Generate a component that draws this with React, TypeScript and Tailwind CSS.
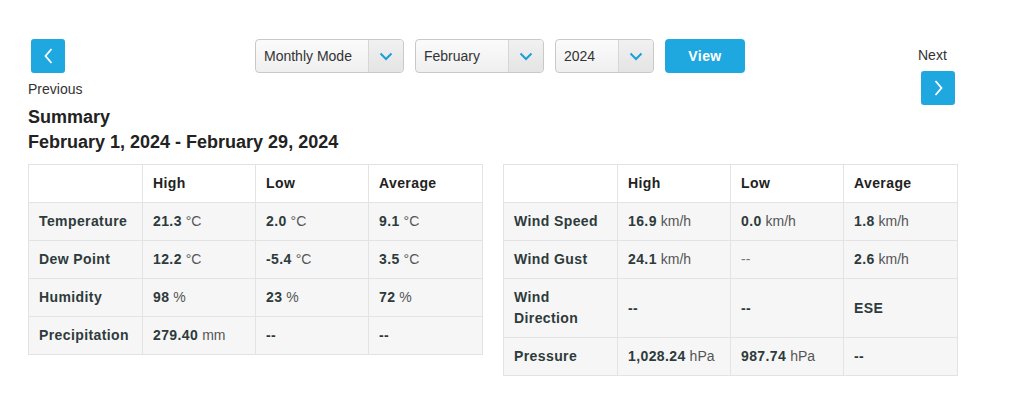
import React from 'react';

type Cell = { v?: string; u?: string; light?: boolean };

const leftRows: { label: string; cells: Cell[] }[] = [
  { label: 'Temperature', cells: [{ v: '21.3', u: '°C' }, { v: '2.0', u: '°C' }, { v: '9.1', u: '°C' }] },
  { label: 'Dew Point', cells: [{ v: '12.2', u: '°C' }, { v: '-5.4', u: '°C' }, { v: '3.5', u: '°C' }] },
  { label: 'Humidity', cells: [{ v: '98', u: '%' }, { v: '23', u: '%' }, { v: '72', u: '%' }] },
  { label: 'Precipitation', cells: [{ v: '279.40', u: 'mm' }, { v: '--' }, { v: '--' }] },
];

const rightRows: { label: string; cells: Cell[]; tall?: boolean }[] = [
  { label: 'Wind Speed', cells: [{ v: '16.9', u: 'km/h' }, { v: '0.0', u: 'km/h' }, { v: '1.8', u: 'km/h' }] },
  { label: 'Wind Gust', cells: [{ v: '24.1', u: 'km/h' }, { v: '--', light: true }, { v: '2.6', u: 'km/h' }] },
  { label: 'Wind Direction', cells: [{ v: '--' }, { v: '--' }, { v: 'ESE' }], tall: true },
  { label: 'Pressure', cells: [{ v: '1,028.24', u: 'hPa' }, { v: '987.74', u: 'hPa' }, { v: '--' }] },
];

function Chevron({ dir }: { dir: 'left' | 'right' | 'down' }) {
  if (dir === 'down') {
    return (
      <svg width="14" height="9" viewBox="0 0 14 9" fill="none">
        <path d="M1.5 1.5 L7 7 L12.5 1.5" stroke="#1b9fd8" strokeWidth="2" />
      </svg>
    );
  }
  return (
    <svg width="9" height="16" viewBox="0 0 9 16" fill="none">
      <path d={dir === 'left' ? 'M7.5 1 L1.5 8 L7.5 15' : 'M1.5 1 L7.5 8 L1.5 15'} stroke="#fff" strokeWidth="1.8" />
    </svg>
  );
}

function NavButton({ dir }: { dir: 'left' | 'right' }) {
  return (
    <button className="flex h-[34px] w-[34px] items-center justify-center rounded-[3px] bg-[#1fa8df]">
      <Chevron dir={dir} />
    </button>
  );
}

function Select({ label, width }: { label: string; width: string }) {
  return (
    <div className={`flex h-[34px] ${width} overflow-hidden rounded-[4px] border border-[#c9c9c9] bg-gradient-to-b from-[#fbfbfb] to-[#efefef] text-[14px] text-[#333]`}>
      <div className="flex flex-1 items-center pl-[8px] pt-[1px]">{label}</div>
      <div className="flex w-[35px] items-center justify-center border-l border-[#d6d6d6] bg-gradient-to-b from-[#f1f1f1] to-[#e4e4e4]">
        <Chevron dir="down" />
      </div>
    </div>
  );
}

function Value({ c }: { c: Cell }) {
  if (c.light) return <span className="text-[#777]">{c.v}</span>;
  return (
    <span>
      <span className="font-bold tracking-[0.4px] text-[#2e3b3b]">{c.v}</span>
      {c.u ? <span className="text-[#555]"> {c.u}</span> : null}
    </span>
  );
}

function StatsTable({ rows }: { rows: { label: string; cells: Cell[]; tall?: boolean }[] }) {
  return (
    <table className="w-[454px] table-fixed border-collapse text-[14px]">
      <colgroup>
        <col className="w-[114px]" />
        <col className="w-[113px]" />
        <col className="w-[113px]" />
        <col className="w-[114px]" />
      </colgroup>
      <thead>
        <tr className="h-[38px] bg-white">
          <th className="border border-[#e3e3e3]" />
          {['High', 'Low', 'Average'].map((h) => (
            <th key={h} className="border border-[#e3e3e3] px-[10px] text-left font-bold tracking-[0.4px] text-[#222]">
              {h}
            </th>
          ))}
        </tr>
      </thead>
      <tbody>
        {rows.map((r) => (
          <tr key={r.label} className={`${r.tall ? 'h-[59px]' : 'h-[38px]'} bg-[#f6f6f6]`}>
            <td className="border border-[#e3e3e3] px-[10px] leading-[21px] font-bold tracking-[0.4px] text-[#2e3b3b]">{r.label}</td>
            {r.cells.map((c, i) => (
              <td key={i} className="border border-[#e3e3e3] px-[10px]">
                <Value c={c} />
              </td>
            ))}
          </tr>
        ))}
      </tbody>
    </table>
  );
}

export default function App() {
  return (
    <div className="h-[406px] w-[1012px] bg-white px-[28px] pt-[39px] font-['Liberation_Sans',Arial,sans-serif] text-[#222]">
      <div className="flex items-start">
        <div className="w-[227px]">
          <div className="ml-[3px]">
            <NavButton dir="left" />
          </div>
          <div className="mt-[8px] text-[14px] leading-[16px] text-[#333]">Previous</div>
        </div>
        <div className="flex gap-[11px]">
          <Select label="Monthly Mode" width="w-[149px]" />
          <Select label="February" width="w-[129px]" />
          <Select label="2024" width="w-[99px]" />
          <button className="h-[34px] w-[80px] rounded-[4px] bg-[#1fa8df] text-[14px] font-bold tracking-[0.4px] text-white">View</button>
        </div>
        <div className="ml-[173px] flex flex-col">
          <div className="mt-[8px] text-[14px] leading-[16px] text-[#333]">Next</div>
          <div className="ml-[3px] mt-[8px]">
            <NavButton dir="right" />
          </div>
        </div>
      </div>
      <div className="text-[18px] leading-[25px] font-bold text-[#222]">
        <div>Summary</div>
        <div>February 1, 2024 - February 29, 2024</div>
      </div>
      <div className="mt-[9px] flex items-start gap-[20px]">
        <StatsTable rows={leftRows} />
        <StatsTable rows={rightRows} />
      </div>
    </div>
  );
}
